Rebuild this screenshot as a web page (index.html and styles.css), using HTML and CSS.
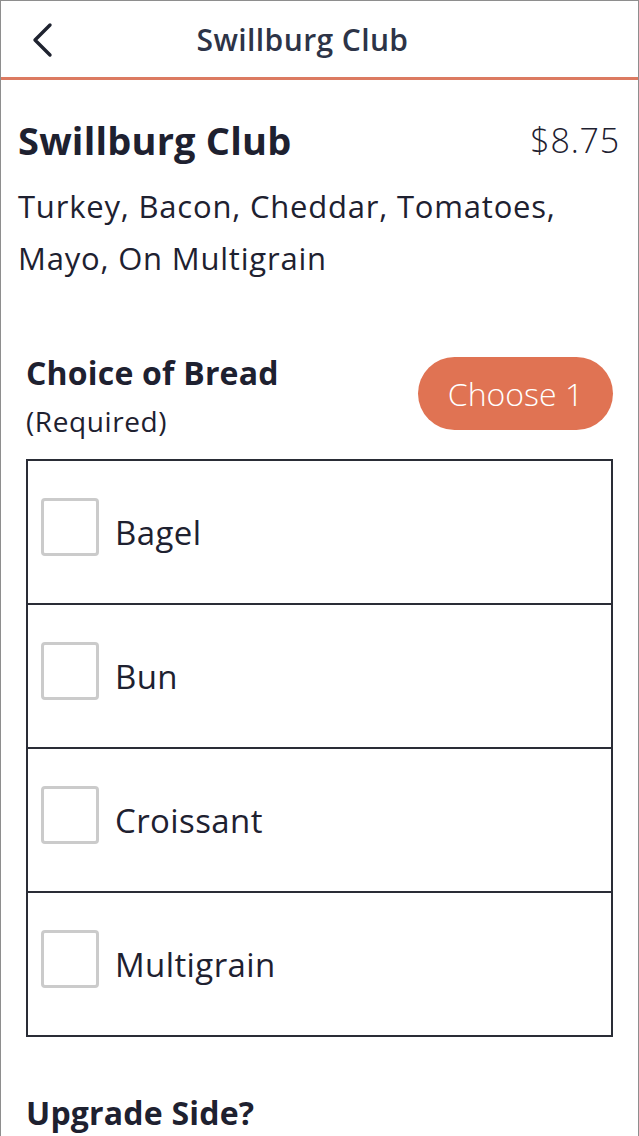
FILE: index.html
```html
<!DOCTYPE html>
<html lang="en">
<head>
    <meta charset="UTF-8">
    <meta name="viewport" content="width=device-width, initial-scale=1.0">
    <title>Swillburg Club</title>
    <link rel="stylesheet" href="styles.css">
</head>
<body>
    <div class="screen">
        <header class="top-bar">
            <svg class="back-icon" width="24" height="36" viewBox="0 0 24 36">
                <path d="M19 3 L4 18 L19 33" fill="none" stroke="#1f2330" stroke-width="3.4" stroke-linecap="round" stroke-linejoin="round"/>
            </svg>
            <h1 class="top-title">Swillburg Club</h1>
        </header>

        <section class="item-info">
            <div class="item-head">
                <h2 class="item-name">Swillburg Club</h2>
                <span class="item-price">$8.75</span>
            </div>
            <p class="item-desc">Turkey, Bacon, Cheddar, Tomatoes, Mayo, On Multigrain</p>
        </section>

        <section class="option-group">
            <div class="group-head">
                <div>
                    <h3 class="group-title">Choice of Bread</h3>
                    <div class="group-note">(Required)</div>
                </div>
                <span class="choose-pill">Choose 1</span>
            </div>
            <div class="option-list">
                <label class="option-row"><span class="check-box"></span>Bagel</label>
                <label class="option-row"><span class="check-box"></span>Bun</label>
                <label class="option-row"><span class="check-box"></span>Croissant</label>
                <label class="option-row"><span class="check-box"></span>Multigrain</label>
            </div>
        </section>

        <section class="option-group next-group">
            <h3 class="group-title">Upgrade Side?</h3>
        </section>
    </div>
</body>
</html>
```

FILE: styles.css
```css
html, body {
    margin: 0;
    padding: 0;
    background: #fff;
}
body {
    font-family: "Open Sans", Lato, Arial, sans-serif;
    color: #1e2130;
}
.screen {
    width: 639px;
    height: 1136px;
    box-sizing: border-box;
    border: 1px solid #8e8e8e;
    border-bottom: none;
    overflow: hidden;
}
.top-bar {
    height: 76px;
    border-bottom: 3px solid #dc7a61;
    display: flex;
    align-items: center;
    justify-content: center;
    padding-right: 34px;
    position: relative;
}
.back-icon {
    position: absolute;
    left: 30px;
    top: 21px;
}
.top-title {
    margin: 0;
    font-size: 30px;
    font-weight: 600;
    color: #2d3447;
    letter-spacing: 0.4px;
}
.item-info {
    padding: 27px 18px 0 17px;
}
.item-head {
    display: flex;
    justify-content: space-between;
    align-items: center;
    height: 66px;
}
.item-name {
    margin: 0;
    font-size: 38px;
    font-weight: 700;
    letter-spacing: 0.2px;
}
.item-price {
    font-size: 34px;
    font-weight: 300;
    letter-spacing: 0.8px;
}
.item-desc {
    margin: 7px 0 0;
    font-size: 31px;
    font-weight: 400;
    line-height: 52px;
    letter-spacing: 0.8px;
    padding-right: 50px;
}
.option-group {
    padding: 0 25px;
}
.group-head {
    display: flex;
    justify-content: space-between;
    align-items: flex-start;
    margin-top: 69px;
    margin-bottom: 23px;
}
.group-title {
    margin: 0;
    font-size: 32px;
    font-weight: 700;
    line-height: 40px;
    letter-spacing: 0.2px;
}
.group-note {
    font-size: 28px;
    font-weight: 400;
    line-height: 30px;
    letter-spacing: 0.6px;
    margin-top: 13px;
}
.choose-pill {
    background: #e07353;
    color: #fff;
    font-size: 32px;
    font-weight: 300;
    width: 195px;
    height: 73px;
    border-radius: 37px;
    display: flex;
    align-items: center;
    justify-content: center;
    margin-top: 4px;
}
.option-list {
    border: 2px solid #2a2d36;
}
.option-row {
    display: flex;
    align-items: center;
    height: 142px;
    border-bottom: 2px solid #2a2d36;
    font-size: 33px;
    letter-spacing: 0.4px;
    padding-left: 13px;
}
.option-row:last-child {
    border-bottom: none;
}
.check-box {
    width: 52px;
    height: 52px;
    border: 3px solid #cbcbcb;
    border-radius: 4px;
    margin-right: 16px;
    margin-bottom: 10px;
}
.next-group {
    margin-top: 56px;
}
```
